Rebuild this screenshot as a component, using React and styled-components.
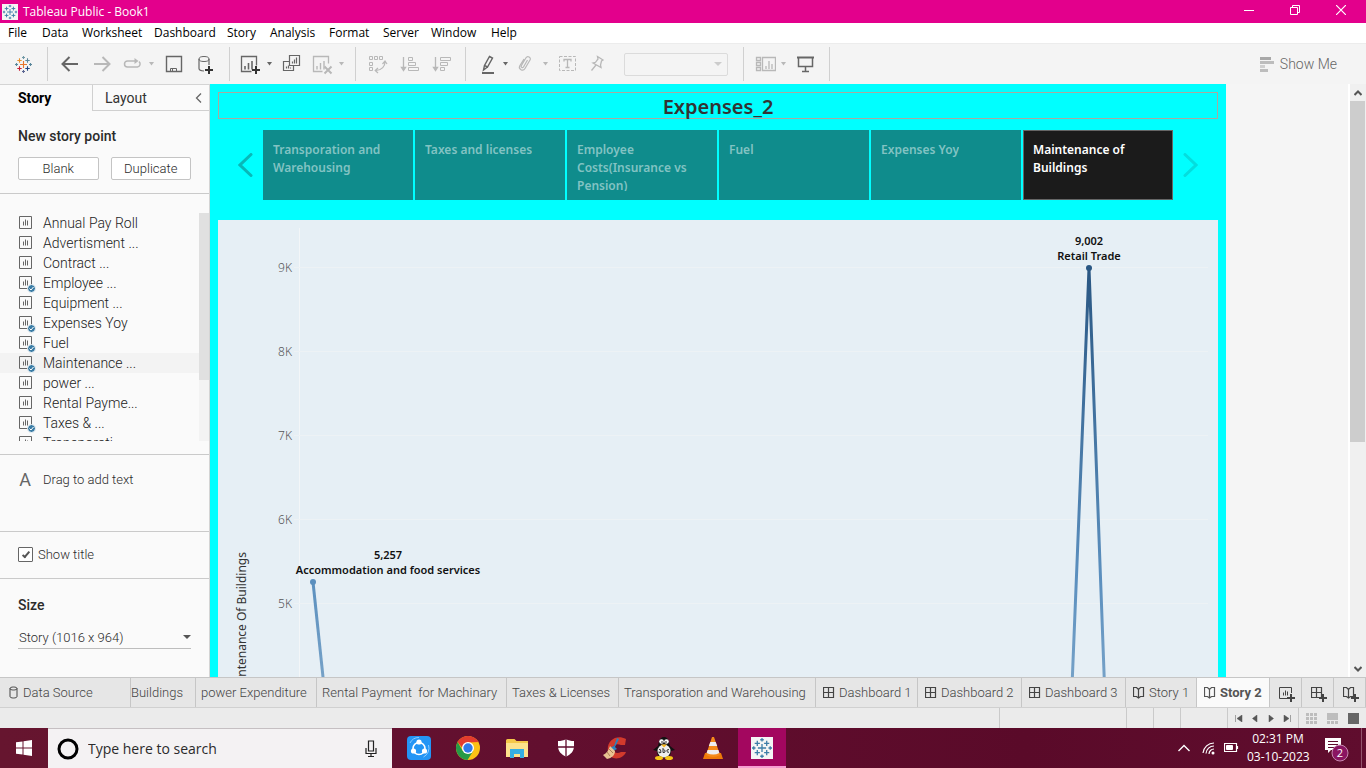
import React from "react";
import styled, { createGlobalStyle, css } from "styled-components";

const system = '"Open Sans", "Noto Sans", sans-serif';
const light = 'Roboto, "Open Sans", sans-serif';
const story = '"Noto Sans", "Open Sans", sans-serif';

const Global = createGlobalStyle`
  *, *::before, *::after { box-sizing: border-box; }
  body { margin: 0; font-family: ${system}; font-size: 12px; color: #000; }
  button, select, input { font: inherit; color: inherit; margin: 0; }
  button { border: 0; background: none; padding: 0; cursor: default; white-space: nowrap; }
  svg { display: block; flex: none; }
  h1, h2, p, ul { margin: 0; padding: 0; }
`;

const Shell = styled.div`
  display: flex;
  flex-direction: column;
  height: 100vh;
  overflow: hidden;
  background: #f5f5f5;
`;

/* Title bar and menu */
const TitleBar = styled.header`
  display: flex;
  align-items: center;
  flex: none;
  height: 23px;
  padding: 0 2px;
  background: #e3008c;
  color: #fff;
`;
const AppTitle = styled.h1`
  flex: 1;
  margin-left: 5px;
  font-size: 12px;
  font-weight: 400;
`;
const WindowButton = styled.button`
  display: flex;
  align-items: center;
  justify-content: center;
  align-self: flex-start;
  width: 46px;
  height: 20px;
`;
const MenuBar = styled.nav`
  display: flex;
  flex: none;
  height: 20px;
  padding-left: 8px;
  background: #fff;
`;
const MenuItem = styled.button`
  width: ${(p) => p.$w}px;
  text-align: left;
  font-size: 12px;
  line-height: 20px;
`;

/* Toolbar */
const Toolbar = styled.div`
  display: flex;
  align-items: center;
  flex: none;
  height: 41px;
  border-top: 1px solid #ececec;
  background: #f4f4f4;
`;
const Tool = styled.button`
  display: flex;
  justify-content: center;
  align-items: center;
  width: ${(p) => p.$w || 32}px;
  height: 32px;
  flex: none;
  color: ${(p) => (p.$off ? "#b8b8b8" : "#666")};
`;
const Divider = styled.span`
  width: 1px;
  height: 34px;
  margin: 0 6px 0 ${(p) => (p.$flush ? 0 : 7)}px;
  background: #d0d0d0;
`;
const FitBox = styled.div`
  display: flex;
  margin: 0 8px;
`;
const FitSelect = styled.select`
  width: 104px;
  height: 23px;
  appearance: none;
  border: 1px solid #d0d0d0;
  border-radius: 2px;
  background: transparent;
`;
const FitArrow = styled.span`
  align-self: center;
  width: 0;
  margin: 0 6px 0 -14px;
  border: 4px solid transparent;
  border-top-color: #ccc;
  border-bottom: 0;
  pointer-events: none;
`;
const ShowMe = styled.button`
  display: flex;
  align-items: center;
  gap: 6px;
  margin-left: auto;
  margin-right: 29px;
  font-family: ${light};
  font-size: 14px;
  font-weight: 300;
  color: #666;
`;

/* Work area */
const Work = styled.main`
  display: flex;
  flex: 1;
  min-height: 0;
`;
const Sidebar = styled.aside`
  display: flex;
  flex-direction: column;
  flex: none;
  width: 210px;
  border-right: 1px solid #d4d4d4;
  background: #fafafa;
  color: #2b2b2b;
  font-family: ${light};
  font-weight: 300;
`;
const SideTabs = styled.div`
  display: flex;
  flex: none;
  height: 27px;
  border-top: 1px solid #d4d4d4;
`;
const SideTab = styled.button`
  display: flex;
  align-items: center;
  justify-content: space-between;
  width: ${(p) => (p.$active ? 92 : 117)}px;
  padding: 0 7px 0 ${(p) => (p.$active ? 18 : 12)}px;
  font-size: 14px;
  font-weight: 400;
  color: #333;
  ${(p) =>
    p.$active
      ? css`
          font-weight: 700;
          color: #000;
        `
      : css`
          border-left: 1px solid #d0d0d0;
          border-bottom: 1px solid #d0d0d0;
        `}
`;
const Section = styled.section`
  flex: none;
  height: ${(p) => p.$h}px;
  padding: ${(p) => p.$pad};
  border-bottom: 1px solid ${(p) => (p.$last ? "transparent" : "#cacaca")};
`;
const SideHeading = styled.h2`
  font-size: 14px;
  line-height: 18px;
  font-weight: 500;
  color: #2b2b2b;
`;
const PointButtons = styled.div`
  display: flex;
  gap: 12px;
  margin-top: 12px;
`;
const PointButton = styled.button`
  flex: 1;
  height: 23px;
  border: 1px solid #c4c4c4;
  border-radius: 2px;
  background: #fff;
  font-size: 13px;
`;
const SheetScroller = styled.div`
  display: flex;
  height: 228px;
  overflow: hidden;
`;
const SheetList = styled.ul`
  flex: 1;
  list-style: none;
`;
const SheetRow = styled.button`
  display: flex;
  align-items: center;
  gap: 7px;
  width: 100%;
  height: 20px;
  padding-left: 18px;
  font-size: 14px;
  font-weight: 300;
  color: #222;
  background: ${(p) => (p.$hover ? "#f3f3f3" : "transparent")};
`;
const ListTrack = styled.div`
  width: 10px;
  background: #f3f3f3;
`;
const ListThumb = styled.div`
  height: 167px;
  background: #e0e0e0;
`;
const TextObject = styled.button`
  display: flex;
  align-items: center;
  gap: 11px;
  font-size: 13px;
`;
const BigA = styled.span`
  width: 14px;
  text-align: center;
  font-size: 18px;
  font-weight: 400;
  color: #666;
`;
const CheckLabel = styled.label`
  display: flex;
  align-items: center;
  gap: 5px;
  font-size: 13px;
`;
const Check = styled.input`
  appearance: none;
  display: grid;
  place-items: center;
  width: 15px;
  height: 15px;
  border: 1px solid #666;
  border-radius: 1px;
  background: #fff;
  &:checked::before {
    content: "";
    width: 4px;
    height: 8px;
    border: solid #555;
    border-width: 0 2px 2px 0;
    transform: translateY(-1px) rotate(40deg);
  }
`;
const SizeBox = styled.div`
  display: flex;
  align-items: center;
  margin-top: 12px;
  border-bottom: 1px solid #bdbdbd;
`;
const SizeSelect = styled.select`
  flex: 1;
  height: 22px;
  padding: 0 0 0 1px;
  border: 0;
  appearance: none;
  background: transparent;
  font-size: 13px;
`;
const SizeArrow = styled(FitArrow)`
  margin: 0 0 0 -8px;
  border-top-color: #555;
`;

/* Story canvas */
const Viewport = styled.div`
  flex: 1;
  min-width: 0;
  overflow: hidden;
  background: #f5f5f5;
`;
const StoryPage = styled.article`
  width: 1016px;
  min-height: 100%;
  padding: 8px;
  background: #00ffff;
  font-family: ${story};
`;
const StoryTitle = styled.h2`
  height: 27px;
  border: 1px solid #a9a99e;
  text-align: center;
  font-size: 20px;
  line-height: 28px;
  font-weight: 600;
  color: #333;
`;
const StoryNav = styled.nav`
  display: flex;
  align-items: center;
  gap: 10px;
  margin: 11px 20px 20px;
`;
const PointList = styled.div`
  display: grid;
  grid-template-columns: repeat(6, 1fr);
  gap: 2px;
  flex: 1;
  height: 70px;
`;
const Point = styled.button`
  display: flex;
  padding: 10px 9px 8px;
  border: 1px solid ${(p) => (p.$active ? "#666" : "#0f8c8c")};
  background: ${(p) => (p.$active ? "#1b1b1b" : "#0f8c8c")};
  color: ${(p) => (p.$active ? "#fff" : "#82c3c3")};
  text-align: left;
  font-size: 12px;
  line-height: 18px;
  font-weight: 600;
  white-space: normal;
`;
const PointText = styled.span`
  height: 50px;
  overflow: hidden;
`;
const Chart = styled.svg`
  background: #e6eff5;
  font-family: ${story};
`;
const PageScroll = styled.div`
  display: flex;
  flex-direction: column;
  width: 18px;
  padding-right: 1px;
  border-left: 2px solid #fff;
  background: #f0f0f0;
`;
const ScrollArrow = styled.button`
  display: grid;
  place-items: center;
  height: 17px;
`;
const ScrollTrack = styled.div`
  flex: 1;
`;
const ScrollThumb = styled.div`
  height: 61%;
  background: #cdcdcd;
`;

/* Sheet tabs and status */
const SheetTabs = styled.div`
  display: flex;
  flex: none;
  height: 31px;
  border-top: 1px solid #c6c6c6;
  border-bottom: 1px solid #d0d0d0;
  background: #e6e6e6;
  font-family: ${light};
  font-weight: 300;
`;
const SheetTab = styled.button`
  display: flex;
  align-items: center;
  gap: 4px;
  width: ${(p) => p.$w}px;
  padding-left: ${(p) => p.$pad ?? 5}px;
  border-right: 1px solid #c6c6c6;
  overflow: hidden;
  font-size: 13px;
  color: #444;
  ${(p) =>
    p.$active &&
    css`
      background: #fafafa;
      font-weight: 700;
      color: #555;
    `}
`;
const StatusBar = styled.div`
  display: flex;
  justify-content: flex-end;
  flex: none;
  height: 20px;
  background: #ebebeb;
`;
const StatusCell = styled.div`
  display: flex;
  align-items: center;
  justify-content: center;
  gap: ${(p) => p.$gap || 0}px;
  width: ${(p) => p.$w}px;
  border-left: 1px solid #cacaca;
`;

/* Taskbar */
const Taskbar = styled.footer`
  display: flex;
  flex: none;
  height: 40px;
  background: linear-gradient(90deg, #66152f, #620f2f 40%, #5a0a29 75%, #600d2e);
  color: #fff;
`;
const StartButton = styled.button`
  display: grid;
  place-items: center;
  width: 48px;
`;
const Search = styled.label`
  display: flex;
  align-items: center;
  width: 344px;
  padding: 0 14px 0 9px;
  border-top: 1px solid #c5bfc2;
  background: #f4f2f3;
`;
const SearchInput = styled.input`
  flex: 1;
  min-width: 0;
  margin-left: 9px;
  padding: 0;
  border: 0;
  outline: 0;
  background: transparent;
  font-size: 14px;
  &::placeholder { color: #2b2b2b; opacity: 1; }
`;
const Apps = styled.div`
  display: flex;
  margin-left: 2px;
`;
const AppButton = styled.button`
  display: grid;
  place-items: center;
  width: 49px;
  ${(p) =>
    p.$active &&
    css`
      width: 48px;
      margin-left: 1px;
      border-bottom: 2px solid #f59ed0;
      padding-top: 2px;
      background: #a3075f;
    `}
`;
const Tray = styled.div`
  display: flex;
  align-items: center;
  gap: 8px;
  margin-left: auto;
  padding-right: 4px;
`;
const HiddenIcons = styled.button`
  margin-right: 4px;
`;
const Clock = styled.time`
  width: 62px;
  text-align: center;
  font-size: 12px;
  line-height: 18px;
  white-space: nowrap;
`;
const Notice = styled.button`
  margin: 0 3px 0 7px;
`;
const DesktopEdge = styled.span`
  align-self: stretch;
  width: 1px;
  background: #93546c;
`;

/* Drawings */
const Svg = ({ w = 24, h = 24, children, ...rest }) => (
  <svg width={w} height={h} viewBox={`0 0 ${w} ${h}`} fill="none" stroke="currentColor" strokeWidth="1" aria-hidden="true" {...rest}>
    {children}
  </svg>
);

const plusAt = (x, y, r) => `M${x - r} ${y}h${2 * r}M${x} ${y - r}v${2 * r}`;

const crosses = [
  [8.5, 8.5, 3.5, "#e8762c"], [4.5, 4.5, 2.2, "#e8912d"], [12.5, 4.5, 2.2, "#5b879b"],
  [4.5, 12.5, 2.2, "#c72035"], [12.5, 12.5, 2.2, "#1f447e"], [8.5, 1.5, 1.5, "#7199a6"],
  [8.5, 15.5, 1.5, "#5b6591"], [1.5, 8.5, 1.5, "#59879b"], [15.5, 8.5, 1.5, "#59879b"],
];
const TableauMark = ({ size = 17, mono, x, y }) => (
  <svg width={size} height={size} x={x} y={y} viewBox="0 0 17 17" fill="none" aria-hidden="true">
    {crosses.map(([cx, cy, r, c]) => (
      <path key={`${cx}-${cy}`} d={plusAt(cx, cy, r)} stroke={mono || c} strokeWidth="1.1" />
    ))}
  </svg>
);
const WhiteMark = ({ size }) => (
  <svg width={size} height={size} viewBox="0 0 22 22" aria-hidden="true">
    <rect width="22" height="22" fill="#f5f5f5" />
    <TableauMark size={20} x={1} y={1} mono="#3d7da8" />
  </svg>
);

const Drop = () => (
  <svg width="6" height="4" viewBox="0 0 6 4" fill="currentColor" aria-hidden="true"><path d="M0 0h5L2.5 3.5z" /></svg>
);

const bars = "M7 17.5v-3.5M10.5 17.5v-6.5M14 17.5v-8.5";

const icons = {
  back: <path d="M20 12H5M11.5 5l-7 7 7 7" strokeWidth="2" />,
  forward: <path d="M4 12h15M12.500 5l7 7-7 7" strokeWidth="2" />,
  redo: <><path d="M15 9H7.500a3 3 0 0 0 0 6h10a3 3 0 0 0 1.500-5.300" strokeWidth="1.500" /><path d="M14.500 6l4 3-4 3z" fill="currentColor" stroke="none" /></>,
  save: <><path d="M4.500 4.500h15v15h-15z" strokeWidth="1.400" /><path d="M8.500 19.500v-3h6v3M10.500 17v2" /></>,
  data: <><ellipse cx="10" cy="7" rx="5" ry="2.500" /><path d="M5 7v9.500c0 1.500 2 2.300 5 2.500M15 7v6" strokeWidth="1.200" /><path d={plusAt(15, 18, 4)} stroke="#333" strokeWidth="2" /></>,
  sheet: <><path d="M18.500 13.500v-9h-15v15h10" strokeWidth="1.300" /><path d={bars} strokeWidth="1.600" /><path d={plusAt(18, 18, 4)} stroke="#333" strokeWidth="2" /></>,
  duplicate: <><path d="M9.500 3.500h10v10h-10zM9 9.500H3.500v9h10V14M12.500 11.500v-2M14.500 11.500v-4M16.500 11.500v-6M6.500 16.500v-2M8.500 16.500v-3M10.500 16.500v-1" strokeWidth="1.200" /></>,
  clear: <><path d="M18.500 11.500v-7h-15v15h9" strokeWidth="1.300" /><path d={bars} strokeWidth="1.400" /><path d="M14.500 14.500l7 7M21.500 14.500l-7 7" strokeWidth="2" /></>,
  swap: <><path d="M3.500 4.500h3v3h-3zM8.500 4.500h3v3h-3zM13.500 4.500h3v3h-3zM3.500 10.500h3v3h-3zM3.500 15.500h3v3h-3z" /><path d="M19 10c0 4-3 8-9 8.500M16.500 12l2.500-3 2 3M12 16l-2.800 2.500L12 21" strokeWidth="1.200" /></>,
  asc: <><path d="M5.500 5v13M3.500 15.500l2 3 2-3z" strokeWidth="1.300" /><path d="M10.500 5.500h4v3h-4zM10.500 10.500h7v3h-7zM10.500 15.500h10v3h-10z" /></>,
  desc: <><path d="M5.500 5v13M3.500 15.500l2 3 2-3z" strokeWidth="1.300" /><path d="M10.500 5.500h10v3h-10zM10.500 10.500h7v3h-7zM10.500 15.500h4v3h-4z" /></>,
  pen: <><path d="M15.500 4.500l3 1.500-5 9-3-1.500zM10.500 13.500L9.500 18l4-3" strokeWidth="1.400" /><path d="M8 21h12" strokeWidth="2" /></>,
  clip: <path d="M13.500 8l-4 7c-.8 1.500-3 .3-2.200-1.200l4.700-8c1.500-2.500 5.500-.5 4 2.200l-5 8.500c-2 3.400-7 .8-5.200-2.700L10 7" strokeWidth="1.200" />,
  text: <><path d="M3.500 4.500h16v14h-16z" strokeDasharray="3 1.500" /><path d="M8 9.500v-2h7v2M11.500 7.500v8M9.500 15.500h4" strokeWidth="1.300" /></>,
  pin: <path d="M9.500 4.500l5.500 3.500-1.500 1-1 4 .5 2.500-8-4.500 2.500-.7 2.500-3.300zM8 13l-4.500 5.500" strokeWidth="1.300" />,
  cards: <path d="M4.500 5.500h4v3h-4zM4.500 10.500h4v3h-4zM4.500 15.500h4v3h-4zM10.500 5.500h13v13h-13zM14 17v-3M17 17V9M20 17v-5" strokeWidth="1.300" />,
  present: <><path d="M3 5.500h17" strokeWidth="2" /><path d="M4.500 5.500v9h14v-9M11.500 15v4.500M8 19.500h7" strokeWidth="1.500" /></>,
};

const ToolIcon = ({ name }) => <Svg>{icons[name]}</Svg>;

const SheetIcon = ({ used }) => (
  <Svg w={18} h={20}>
    <path d="M1.500 3.500h12v12h-12z" stroke="#666" />
    <path d="M5.500 12.500v-4M7.500 12.500v-6M9.500 12.500v-5" stroke="#666" />
    {used && (
      <>
        <circle cx="13.500" cy="15.500" r="4" fill="#3a7ca5" stroke="#fafafa" />
        <path d="M11.500 15.500l1.500 1.500 2.500-3" stroke="#fff" />
      </>
    )}
  </Svg>
);
const GridIcon = ({ add }) => (
  <Svg w={add ? 17 : 12} h={18}>
    <path d="M.5 3.500h10v10H.5zM5.500 3.500v10M.5 8.500h10" strokeWidth="1.200" />
    {add && <path d={plusAt(12, 14, 4)} strokeWidth="2" />}
  </Svg>
);
const BookIcon = ({ add }) => (
  <Svg w={add ? 17 : 12} h={18}>
    <path d="M5.500 5.500L3.500 3.500H.5v9h3l2 1.500 2-1.500h3v-9h-3zM5.500 5.500V14" strokeWidth="1.200" />
    {add && <path d={plusAt(12, 14, 4)} strokeWidth="2" />}
  </Svg>
);
const AddSheetIcon = () => (
  <Svg w={17} h={18}>
    <path d="M12.500 9V3.500H.5v11H8M4.500 11.500v-3M6.500 11.500v-5M8.500 11.500v-4" />
    <path d={plusAt(12, 14, 4)} strokeWidth="2" />
  </Svg>
);
const DataIcon = () => (
  <Svg w={10} h={18}>
    <path d="M1 4.500v8c0 2 7 2 7 0v-8M1 4.500c0-2 7-2 7 0s-7 2-7 0z" />
  </Svg>
);

const appIcons = {
  SHAREit: (
    <Svg stroke="none">
      <rect width="24" height="24" rx="4" fill="#2395f5" />
      <circle cx="12" cy="12.500" r="6" stroke="#fff" strokeWidth="1.600" />
      <circle cx="12" cy="6" r="2.600" fill="#fff" /><circle cx="6.500" cy="15" r="2.600" fill="#fff" /><circle cx="17.500" cy="15" r="2.600" fill="#fff" />
      <path d="M3 7a10 10 0 0 1 9-5.500M21.500 9a10 10 0 0 1-5 12" stroke="#8dcbff" />
    </Svg>
  ),
  Chrome: (
    <Svg stroke="none">
      <circle cx="12" cy="12" r="12" fill="#fbc116" />
      <path d="M1.600 6A12 12 0 0 1 22.400 6L12 6.500 8 14z" fill="#e33b2e" />
      <path d="M1.600 6A12 12 0 0 0 11.500 24L17.200 15 6.800 15z" fill="#269a47" />
      <circle cx="12" cy="12" r="6" fill="#fff" /><circle cx="12" cy="12" r="4.700" fill="#2f79ea" />
    </Svg>
  ),
  "File Explorer": (
    <Svg stroke="none">
      <path d="M1 4.500q0-1.500 1.500-1.500h7l2 2H23v16H1z" fill="#f5c849" /><path d="M1 7h22v14H1z" fill="#fde28c" />
      <path d="M5 13h14v9h-4v-4H9v4H5z" fill="#35aee2" />
    </Svg>
  ),
  Security: (
    <Svg stroke="none">
      <path d="M12 3c2 1.500 5 2 8 2v5c0 5-3 8.500-8 10.500C7 18.500 4 15 4 10V5c3 0 6-.5 8-2z" fill="#fff" />
      <path d="M12 3v17.500M4 11h16" stroke="#5f0d2d" strokeWidth="1.300" />
    </Svg>
  ),
  CCleaner: (
    <Svg stroke="none">
      <path d="M23 3l-1 6h-4c-5-2-8 0-8 4 1 4 4 5 8 3h5c-3 8-16 9-18 0C3 5 13-2 23 3z" fill="#d23a2c" />
      <path d="M14 2l2 1-4 8 2 2-4 2-4-3 5-2z" fill="#2a82bd" />
      <path d="M7 10l5 5c0 4-3 7-8 8l-4-4c4-2 5-4 7-9z" fill="#e8c293" /><path d="M4 16l3 4M6 13l4 4" stroke="#ad7e52" />
    </Svg>
  ),
  Penguin: (
    <Svg stroke="none">
      <path d="M12 1c5 0 5 6 6 9l5 4-4 1c0 5-3 7-7 7s-7-2-7-7l-4-1 5-4c1-3 1-9 6-9z" fill="#111" />
      <ellipse cx="12" cy="15" rx="6.500" ry="6.500" fill="#eee" /><circle cx="9.500" cy="5.500" r="2.300" fill="#fff" /><circle cx="14.500" cy="5.500" r="2.300" fill="#fff" />
      <circle cx="10" cy="6" r=".8" fill="#111" /><circle cx="14" cy="6" r=".8" fill="#111" />
      <path d="M9 8.500h6l-3 3z" fill="#f7b718" /><ellipse cx="7" cy="22" rx="4" ry="2" fill="#f7c516" /><ellipse cx="17" cy="22" rx="4" ry="2" fill="#f7c516" />
      <path d="M7 13.500q2-1 2 3-3 1-2-1M11 12v4.500h1.500q2-2-1-3M17 13.500q-3 0-2 2 1 1.500 2 .5" stroke="#333" />
    </Svg>
  ),
  VLC: (
    <Svg stroke="none">
      <path d="M4 17h16l2 6H2z" fill="#ee7a09" /><path d="M11 1h2l6 18q-7 4-14 0z" fill="#f58b1b" />
      <path d="M9.300 6h5.400l1.500 4H7.800zM6.600 14h10.800l1 3q-6 3-12.800 0z" fill="#eee" />
    </Svg>
  ),
};

const WindowsLogo = () => (
  <Svg w={16} h={16} stroke="none">
    <path d="M0 2.300L6.500 1.400V7.500H0zM7.500 1.200L16 0v7.500H7.500zM0 8.500h6.500v6.100L0 13.700zM7.500 8.500H16V16l-8.500-1.200z" fill="#fff" />
  </Svg>
);

/* Data */
const menu = [["File", 34], ["Data", 40], ["Worksheet", 72], ["Dashboard", 73], ["Story", 43], ["Analysis", 59], ["Format", 54], ["Server", 48], ["Window", 60], ["Help", 34]];

const tools = [
  { name: "back", label: "Undo" },
  { name: "forward", label: "Redo", off: true },
  { name: "redo", label: "Replay", off: true, drop: true },
  { name: "save", label: "Save" },
  { name: "data", label: "New data source" },
  null,
  { name: "sheet", label: "New worksheet", drop: true },
  { name: "duplicate", label: "Duplicate sheet" },
  { name: "clear", label: "Clear sheet", off: true, drop: true },
  null,
  { name: "swap", label: "Swap rows and columns", off: true },
  { name: "asc", label: "Sort ascending", off: true },
  { name: "desc", label: "Sort descending", off: true },
  null,
  { name: "pen", label: "Highlight", drop: true },
  { name: "clip", label: "Group members", off: true, drop: true },
  { name: "text", label: "Show mark labels", off: true },
  { name: "pin", label: "Fix axes", off: true },
];
const endTools = [
  { name: "cards", label: "Show or hide cards", off: true, drop: true },
  { name: "present", label: "Presentation mode" },
];

const sheets = [
  ["Annual Pay Roll"], ["Advertisment ..."], ["Contract ..."], ["Employee ...", true], ["Equipment ..."],
  ["Expenses Yoy", true], ["Fuel", true], ["Maintenance ...", true], ["power ..."], ["Rental Payme..."],
  ["Taxes & ...", true], ["Transporati..."],
];
const points = ["Transporation and Warehousing", "Taxes and licenses", "Employee Costs(Insurance vs Pension)", "Fuel", "Expenses Yoy", "Maintenance of Buildings"];
const tabs = [
  ["Data Source", 131, <DataIcon />, 9], ["Buildings", 65, null, 0], ["power Expenditure", 121], ["Rental Payment  for Machinary", 190],
  ["Taxes & Licenses", 112], ["Transporation and Warehousing", 197], ["Dashboard 1", 102, <GridIcon />, 7], ["Dashboard 2", 104, <GridIcon />, 7],
  ["Dashboard 3", 104, <GridIcon />, 7], ["Story 1", 71, <BookIcon />, 7], ["Story 2", 73, <BookIcon />, 7, true],
];
const ticks = ["9K", "8K", "7K", "6K", "5K", "4K", "3K", "2K", "1K"];

const ToolGroup = ({ items }) =>
  items.map((t, i) =>
    t ? (
      <React.Fragment key={t.name}>
        <Tool $off={t.off} $w={t.drop ? 28 : 32} aria-label={t.label}><ToolIcon name={t.name} /></Tool>
        {t.drop && <Tool $off={t.off} $w={12} aria-label={`${t.label} options`}><Drop /></Tool>}
      </React.Fragment>
    ) : (
      <Divider key={i} />
    )
  );

const ExpenseChart = () => (
  <Chart width="1000" height="820" viewBox="0 0 1000 820" role="img" aria-label="Maintenance of buildings by industry">
    <defs>
      <linearGradient id="depth" gradientUnits="userSpaceOnUse" x1="0" y1="48" x2="0" y2="457">
        <stop offset="0" stopColor="#2a5783" /><stop offset=".75" stopColor="#5b8fbe" /><stop offset="1" stopColor="#75a1c7" />
      </linearGradient>
    </defs>
    <path d="M81.500 8v790" stroke="#f3f6f8" />
    {ticks.map((t, i) => (
      <g key={t}>
        <path d={`M76 ${47.5 + 84 * i}H990`} stroke="#edf2f5" />
        <text x="74" y={52 + 84 * i} textAnchor="end" fontSize="12" fontWeight="300" fill="#555">{t}</text>
      </g>
    ))}
    <text transform="translate(28 332) rotate(-90)" textAnchor="end" fontSize="12" fill="#333">Maintenance Of Buildings</text>
    <g fill="none" stroke="url(#depth)" strokeWidth="3">
      <path d="M95 362L119 590" /><path d="M840 811L871 48L900 829" strokeLinejoin="round" />
    </g>
    <circle cx="95" cy="362" r="3" fill="#5b8fbe" />
    <circle cx="871" cy="48" r="3" fill="#2a5783" />
    <g textAnchor="middle" fontSize="11" fontWeight="600" fill="#111">
      <text x="871" y="25">9,002</text><text x="871" y="40">Retail Trade</text>
      <text x="170" y="339">5,257</text><text x="170" y="354">Accommodation and food services</text>
    </g>
  </Chart>
);

export default function App() {
  return (
    <Shell>
      <Global />
      <TitleBar>
        <WhiteMark size={16} />
        <AppTitle>Tableau Public - Book1</AppTitle>
        <WindowButton aria-label="Minimize"><Svg w={10} h={10}><path d="M0 5.500h10" /></Svg></WindowButton>
        <WindowButton aria-label="Restore"><Svg w={10} h={10}><path d="M.5 2.500h7v7h-7zM2.500 2V.5h7v7H8" /></Svg></WindowButton>
        <WindowButton aria-label="Close"><Svg w={10} h={10}><path d="M0 0l10 10M10 0L0 10" strokeWidth="1.200" /></Svg></WindowButton>
      </TitleBar>
      <MenuBar>
        {menu.map(([m, w]) => <MenuItem key={m} $w={w}>{m}</MenuItem>)}
      </MenuBar>
      <Toolbar>
        <Tool $w={47} aria-label="Start page"><TableauMark /></Tool>
        <Divider $flush />
        <ToolGroup items={tools} />
        <FitBox>
          <FitSelect aria-label="Fit" disabled />
          <FitArrow />
        </FitBox>
        <Divider />
        <ToolGroup items={endTools} />
        <Divider />
        <ShowMe>
          <Svg w={14} h={15} stroke="none">
            <path d="M0 0h11v3H0z" fill="#a8a8a8" /><path d="M0 4h14v3H0zM0 12h8v3H0z" fill="#bdbdbd" /><path d="M0 8h5v3H0z" fill="#d0d0d0" />
          </Svg>
          Show Me
        </ShowMe>
      </Toolbar>

      <Work>
        <Sidebar>
          <SideTabs>
            <SideTab $active>Story</SideTab>
            <SideTab>Layout<Svg w={7} h={12}><path d="M6 1.500L1.500 6 6 10.500" stroke="#666" strokeWidth="1.300" /></Svg></SideTab>
          </SideTabs>
          <Section $h={83} $pad="16px 18px 0">
            <SideHeading>New story point</SideHeading>
            <PointButtons><PointButton>Blank</PointButton><PointButton>Duplicate</PointButton></PointButtons>
          </Section>
          <Section $h={261} $pad="19px 0 0">
            <SheetScroller>
              <SheetList>
                {sheets.map(([name, used]) => (
                  <li key={name}>
                    <SheetRow $hover={name.startsWith("Maint")}><SheetIcon used={used} />{name}</SheetRow>
                  </li>
                ))}
              </SheetList>
              <ListTrack><ListThumb /></ListTrack>
            </SheetScroller>
          </Section>
          <Section $h={77} $pad="14px 18px 0">
            <TextObject><BigA>A</BigA>Drag to add text</TextObject>
          </Section>
          <Section $h={47} $pad="15px 18px 0">
            <CheckLabel><Check type="checkbox" defaultChecked />Show title</CheckLabel>
          </Section>
          <Section $h={98} $pad="17px 18px 0" $last>
            <SideHeading as="label" htmlFor="story-size">Size</SideHeading>
            <SizeBox>
              <SizeSelect id="story-size"><option>Story (1016 x 964)</option></SizeSelect>
              <SizeArrow />
            </SizeBox>
          </Section>
        </Sidebar>

        <Viewport>
          <StoryPage>
            <StoryTitle>Expenses_2</StoryTitle>
            <StoryNav>
              <button aria-label="Previous point"><Svg w={15} h={24}><path d="M13 1.500L2 12l11 10.500" stroke="#08b8b8" strokeWidth="3" strokeLinecap="round" /></Svg></button>
              <PointList>
                {points.map((p, i) => (
                  <Point key={p} $active={i === 5}><PointText>{p}</PointText></Point>
                ))}
              </PointList>
              <button aria-label="Next point"><Svg w={15} h={24}><path d="M2 1.500L13 12 2 22.500" stroke="#04dede" strokeWidth="3" strokeLinecap="round" /></Svg></button>
            </StoryNav>
            <ExpenseChart />
          </StoryPage>
        </Viewport>
        <PageScroll>
          <ScrollArrow aria-label="Scroll up"><Svg w={8} h={6}><path d="M.5 5L4 1.500 7.500 5" stroke="#555" strokeWidth="2" /></Svg></ScrollArrow>
          <ScrollTrack><ScrollThumb /></ScrollTrack>
          <ScrollArrow aria-label="Scroll down"><Svg w={8} h={6}><path d="M.5 1L4 4.500 7.500 1" stroke="#555" strokeWidth="2" /></Svg></ScrollArrow>
        </PageScroll>
      </Work>

      <SheetTabs>
        {tabs.map(([name, w, icon, pad, active]) => (
          <SheetTab key={name} $w={w} $pad={pad} $active={active}>{icon}{name.replace("  ", " \u00a0")}</SheetTab>
        ))}
        <SheetTab $w={32} $pad={9} aria-label="New worksheet"><AddSheetIcon /></SheetTab>
        <SheetTab $w={32} $pad={9} aria-label="New dashboard"><GridIcon add /></SheetTab>
        <SheetTab $w={32} $pad={9} aria-label="New story"><BookIcon add /></SheetTab>
      </SheetTabs>
      <StatusBar>
        <StatusCell $w={127} /><StatusCell $w={27} /><StatusCell $w={27} /><StatusCell $w={47} />
        <StatusCell $w={71} $gap={8}>
          {["M.5 0v7M7 0v7L2 3.500z", "M6 0v7L1.500 3.500z", "M2 0v7l4.500-3.500z", "M7.500 0v7M1 0v7l5-3.500z"].map((d) => (
            <Svg key={d} w={8} h={7} color="#555"><path d={d} fill="currentColor" strokeWidth=".5" /></Svg>
          ))}
        </StatusCell>
        <StatusCell $w={68} $gap={10}>
          <Svg w={11} h={11} stroke="none" fill="#bdbdbd"><path d="M0 0h3v3H0zM4 0h3v3H4zM8 0h3v3H8zM0 4h3v3H0zM4 4h3v3H4zM8 4h3v3H8zM0 8h3v3H0zM4 8h3v3H4zM8 8h3v3H8z" /></Svg>
          <Svg w={11} h={11} stroke="none" fill="#bdbdbd"><path d="M0 0h11v7H0zM0 8h3v3H0zM4 8h3v3H4zM8 8h3v3H8z" /></Svg>
          <Svg w={11} h={11} stroke="none" fill="#666"><path d="M0 0h11v11H0z" /></Svg>
        </StatusCell>
      </StatusBar>

      <Taskbar>
        <StartButton aria-label="Start"><WindowsLogo /></StartButton>
        <Search>
          <Svg w={22} h={22}><circle cx="11" cy="11" r="9" stroke="#000" strokeWidth="3" /></Svg>
          <SearchInput placeholder="Type here to search" aria-label="Search" />
          <Svg w={13} h={18}><path d="M3.500 1h5v10h-5zM1 8v5.500h10V8M6 14v3M3 16.500h6" stroke="#222" strokeWidth="1.200" /></Svg>
        </Search>
        <Apps>
          {Object.entries(appIcons).map(([name, icon]) => <AppButton key={name} aria-label={name}>{icon}</AppButton>)}
          <AppButton $active aria-label="Tableau Public"><WhiteMark size={22} /></AppButton>
        </Apps>
        <Tray>
          <HiddenIcons aria-label="Show hidden icons"><Svg w={12} h={8}><path d="M.5 7L6 1.500 11.500 7" strokeWidth="1.400" /></Svg></HiddenIcons>
          <Svg w={14} h={14} strokeWidth="1.200"><path d="M1 12A11 11 0 0 1 12 2M4 12.500A8 8 0 0 1 12 5M7 13a5 5 0 0 1 5-5" /><circle cx="11" cy="12" r="1.500" fill="#fff" stroke="none" /></Svg>
          <Svg w={15} h={10}><path d="M.5.5h12v8H.5zM13.500 3v3" strokeWidth="1.200" /><path d="M2.500 2.500h6v4h-6z" fill="#fff" /></Svg>
          <Clock>02:31 PM<br />03-10-2023</Clock>
          <Notice aria-label="2 notifications">
            <Svg w={26} h={28} stroke="none">
              <path d="M1 4h16v12H7l-3 3v-3H1z" fill="#fff" /><path d="M4 7.500h10M4 10.500h10M4 13.500h8" stroke="#5f0d2d" />
              <circle cx="16" cy="19" r="8" fill="#8a1561" stroke="#c689b0" />
              <text x="16" y="23" textAnchor="middle" fontSize="11" fill="#fff">2</text>
            </Svg>
          </Notice>
          <DesktopEdge />
        </Tray>
      </Taskbar>
    </Shell>
  );
}
